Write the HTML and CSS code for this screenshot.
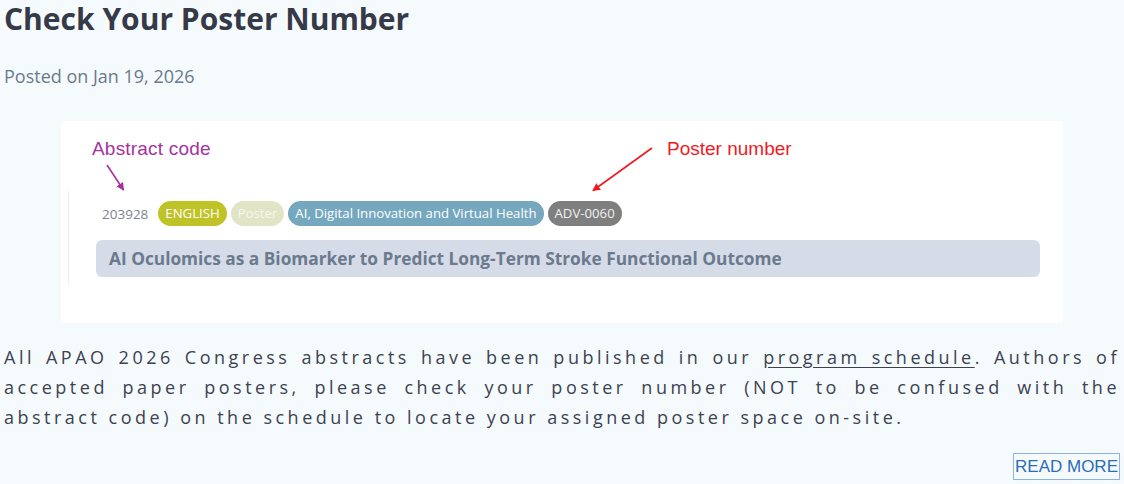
FILE: index.html
```html
<!DOCTYPE html>
<html lang="en">
<head>
<meta charset="utf-8">
<title>Check Your Poster Number</title>
<link rel="stylesheet" href="styles.css">
</head>
<body>
<article class="post">
  <h1 class="post-title">Check Your Poster Number</h1>
  <p class="post-meta">Posted on Jan 19, 2026</p>
  <figure class="shot">
    <span class="note note-abstract">Abstract code</span>
    <span class="note note-poster">Poster number</span>
    <svg class="arrows" width="1002" height="202" viewBox="0 0 1002 202">
      <defs>
        <marker id="hp" markerWidth="8" markerHeight="8" refX="7" refY="4" orient="auto" markerUnits="userSpaceOnUse">
          <path d="M0,0 L8,4 L0,8 z" fill="#a5339f"/>
        </marker>
        <marker id="hr" markerWidth="8" markerHeight="8" refX="7" refY="4" orient="auto" markerUnits="userSpaceOnUse">
          <path d="M0,0 L8,4 L0,8 z" fill="#f2191e"/>
        </marker>
      </defs>
      <line x1="46" y1="44" x2="62.5" y2="69" stroke="#a5339f" stroke-width="1.6" marker-end="url(#hp)"/>
      <line x1="591" y1="27" x2="532" y2="69.5" stroke="#f2191e" stroke-width="1.6" marker-end="url(#hr)"/>
    </svg>
    <div class="card">
      <div class="tags">
        <span class="code">203928</span>
        <span class="pill pill-lang">ENGLISH</span>
        <span class="pill pill-type">Poster</span>
        <span class="pill pill-topic">AI, Digital Innovation and Virtual Health</span>
        <span class="pill pill-num">ADV-0060</span>
      </div>
      <div class="abs-title">AI Oculomics as a Biomarker to Predict Long-Term Stroke Functional Outcome</div>
    </div>
  </figure>
  <p class="post-body">All APAO 2026 Congress abstracts have been published in our <a href="#">program schedule</a>. Authors of accepted paper posters, please check your poster number (NOT to be confused with the abstract code) on the schedule to locate your assigned poster space on-site.</p>
  <div class="more-row"><a class="more" href="#">READ MORE</a></div>
</article>
</body>
</html>
```

FILE: styles.css
```css
html, body {
  margin: 0;
  padding: 0;
  background: #f5fafd;
}
body {
  font-family: "Open Sans", "Noto Sans", sans-serif;
  color: #3b4150;
}
.post {
  padding: 0 4px;
}
.post-title {
  margin: 0;
  padding-top: 0;
  font-size: 30px;
  line-height: 38px;
  font-weight: 700;
  color: #363a48;
}
.post-meta {
  margin: 26px 0 0;
  font-size: 18px;
  line-height: 24px;
  color: #6b7b8c;
}
.shot {
  position: relative;
  box-sizing: border-box;
  width: 1002px;
  height: 202px;
  margin: 33px auto 0;
  background: #ffffff;
  padding: 70px 23px 0 7px;
}
.note {
  position: absolute;
  top: 17px;
  font-family: "Liberation Sans", Arial, sans-serif;
  font-size: 19px;
  line-height: 22px;
}
.note-abstract {
  left: 31px;
  color: #a5339f;
  letter-spacing: 0.2px;
}
.note-poster {
  left: 606px;
  color: #f2191e;
}
.arrows {
  position: absolute;
  left: 0;
  top: 0;
  pointer-events: none;
}
.card {
  border-left: 1px solid #ececec;
  padding: 10px 0 8px 27px;
}
.tags {
  display: flex;
  align-items: center;
  gap: 4px;
  padding-left: 6px;
}
.code {
  font-size: 13.5px;
  color: #7d8593;
  margin-right: 6px;
}
.pill {
  display: inline-block;
  height: 25px;
  line-height: 25px;
  padding: 0 7px;
  border-radius: 13px;
  font-size: 13.2px;
  color: #ffffff;
  white-space: nowrap;
}
.pill-lang { background: #c0c328; }
.pill-type { background: #e2e5c5; color: #f7f7ee; }
.pill-topic { background: #75a8bf; }
.pill-num { background: #7f7f7f; color: #f0f0f0; }
.abs-title {
  margin-top: 14px;
  height: 37px;
  line-height: 37px;
  padding: 0 13px;
  background: #d6dce7;
  border-radius: 6px;
  font-size: 17.3px;
  font-weight: 700;
  color: #6a7a8f;
  white-space: nowrap;
}
.post-body {
  margin: 19px 0 0;
  font-size: 18px;
  line-height: 30px;
  letter-spacing: 3.5px;
  text-align: justify;
  color: #3c4251;
}
.post-body a {
  color: #3c4251;
  text-decoration: underline;
  text-underline-offset: 3px;
}
.more-row {
  display: flex;
  justify-content: flex-end;
  margin-top: 21px;
}
.more {
  display: block;
  border: 1px solid #8fb3e0;
  padding: 0 1px;
  font-family: "Liberation Sans", Arial, sans-serif;
  font-size: 17px;
  line-height: 25px;
  color: #2d6cb5;
  text-decoration: none;
}
```
